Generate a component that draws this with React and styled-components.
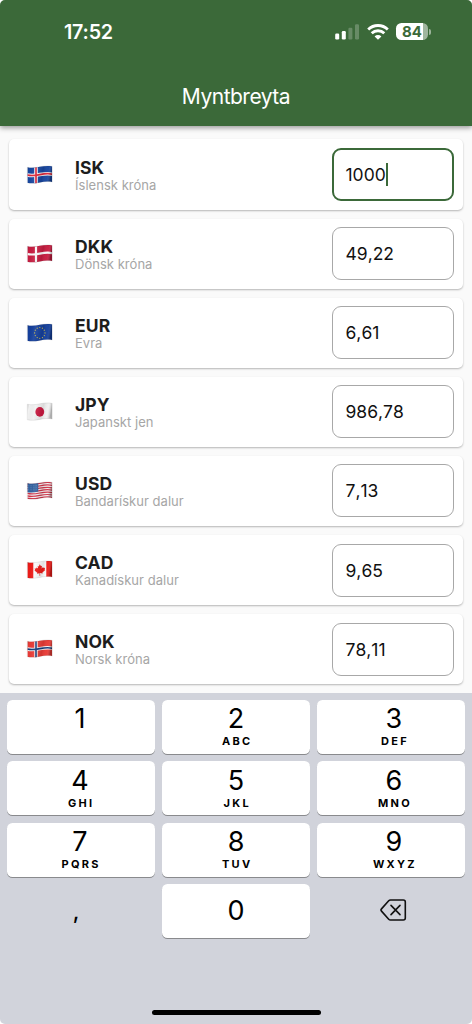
import { useState } from "react";
import styled, { createGlobalStyle } from "styled-components"

const colors = {
  green: `#3b6939`,
  page: `#fafafa`,
  keyboard: `#d1d3db`,
  text: `#1d1d1d`,
  muted: `#a6a6a6`,
}

const GlobalStyle = createGlobalStyle`
  * {
    box-sizing: border-box;
  }
  body {
    margin: 0;
    background-color: white;
    font-family: Inter, "Liberation Sans", sans-serif;
  }
`

const Screen = styled.div`
  width: 472px;
  height: 1024px;
  display: flex;
  flex-direction: column;
  overflow: hidden;
  border-radius: 5px;
  background-color: ${colors.page};
`

const Header = styled.header`
  flex: none;
  height: 126.4px;
  background-color: ${colors.green};
  color: white;
  box-shadow: 0 2px 5px rgba(0, 0, 0, 0.38);
  z-index: 1;
`

const StatusBar = styled.div`
  display: flex;
  justify-content: space-between;
  align-items: center;
  height: 64px;
  padding: 0 41px 0 64px;
`

const Time = styled.span`
  font-size: 19.7px;
  font-weight: 600;
  letter-spacing: -0.2px;
`

const StatusIcons = styled.div`
  display: flex;
  align-items: center;
  gap: 7px;
`

const Battery = styled.div`
  display: flex;
  align-items: center;
  gap: 1px;
  margin-top: -1px;
  &::after {
    content: "";
    width: 2px;
    height: 6px;
    border-radius: 0 2px 2px 0;
    background-color: rgba(255, 255, 255, 0.5);
  }
`

const BatteryLevel = styled.div`
  width: 32px;
  height: 17px;
  border-radius: 5.5px;
  background: linear-gradient(to right, white ${props => props.$level}%, #a0b59f ${props => props.$level}%);
  color: ${colors.green};
  font-size: 15px;
  font-weight: 700;
  line-height: 17px;
  text-align: center;
`

const Title = styled.h1`
  margin: 0;
  padding-top: 20px;
  font-size: 21px;
  font-weight: 400;
  line-height: 26px;
  letter-spacing: -0.5px;
  text-align: center;
`

const CurrencyList = styled.main`
  flex: none;
  height: 566.6px;
  display: flex;
  flex-direction: column;
  gap: 9px;
  padding: 13.1px 9px 0;
`

const CurrencyCard = styled.div`
  flex: none;
  height: 70.1px;
  display: flex;
  align-items: center;
  padding: 0 9px 0 17px;
  border-radius: 5px;
  background-color: white;
  box-shadow: 0 1px 2px rgba(0, 0, 0, 0.28);
`

const FlagIcon = styled.svg`
  flex: none;
  width: 27px;
  height: 20px;
`

const CurrencyText = styled.div`
  flex: 1;
  padding: 1px 0 0 22px;
`

const Code = styled.div`
  color: ${colors.text};
  font-size: 17.5px;
  font-weight: 700;
  line-height: 20px;
  letter-spacing: 0.1px;
`

const Name = styled.div`
  color: ${colors.muted};
  font-size: 13px;
  line-height: 15px;
  letter-spacing: 0.03px;
`

const AmountField = styled.div`
  width: 122.5px;
  height: 53px;
  display: flex;
  align-items: center;
  padding-left: ${props => props.$active ? 12 : 13}px;
  border: ${props => props.$active ? `2px solid ${colors.green}` : `1px solid #a8a8a8`};
  border-radius: 9px;
  color: #111;
  font-size: 17.5px;
  font-kerning: none;
  cursor: text;
`

const Caret = styled.span`
  width: 2px;
  height: 23px;
  background-color: ${colors.green};
`

const Keyboard = styled.div`
  flex: 1;
  display: flex;
  flex-direction: column;
  justify-content: space-between;
  align-items: center;
  padding: 6.6px 7px 9px;
  background-color: ${colors.keyboard};
`

const Keys = styled.div`
  width: 100%;
  display: grid;
  grid-template-columns: repeat(3, 1fr);
  grid-auto-rows: 54px;
  gap: 7.6px 7px;
`

const Key = styled.button`
  display: flex;
  flex-direction: column;
  align-items: center;
  justify-content: ${props => props.$centered ? "center" : "flex-start"};
  padding: ${props => props.$centered ? "0 0 1px" : "3.5px 0 0"};
  border: none;
  border-radius: 5.5px;
  background-color: ${props => props.$plain ? "transparent" : "white"};
  box-shadow: ${props => props.$plain ? "none" : "0 1px 0 #898a8d"};
  color: black;
  font-family: inherit;
  cursor: pointer;
  /* outer columns sit slightly off centre */
  &:nth-child(3n + 1) {
    padding-right: ${props => props.$plain ? 10 : 2}px;
  }
  &:nth-child(3n) {
    padding-left: 5.5px;
  }
`

const Digit = styled.span`
  font-size: 27px;
  font-weight: 400;
  line-height: 32px;
`

const Comma = styled.span`
  font-size: 22px;
  font-weight: 500;
  line-height: 30px;
`

const Letters = styled.span`
  padding-left: 2.4px;
  font-size: 11px;
  font-weight: 700;
  line-height: 12px;
  letter-spacing: 2.3px;
`

const HomeIndicator = styled.div`
  width: 169px;
  height: 5.5px;
  border-radius: 3px;
  background-color: black;
`

const SignalIcon = () => {
  return (
    <svg width="25" height="16" viewBox="0 0 25 16" fill="#FFF">
      <rect x="0.2" y="9.5" width="4" height="6" rx="1.2" />
      <rect x="6.8" y="7" width="4" height="8.5" rx="1.2" />
      <rect x="13.4" y="3.7" width="4" height="11.8" rx="1.2" opacity="0.23" />
      <rect x="20" y="0.3" width="4" height="15.2" rx="1.2" opacity="0.23" />
    </svg>
  )
}

const WifiIcon = () => {
  return (
    <svg width="22" height="16" viewBox="0 0 22 16" fill="none" stroke="#FFF" strokeWidth="2.8">
      <path d="M1.2 5.5a14 14 0 0 1 19.6 0" />
      <path d="M4.7 9.3a9 9 0 0 1 12.6 0" />
      <path d="M11 15.7L7.6 12.4a4.8 4.8 0 0 1 6.8 0z" fill="#FFF" stroke="none" />
    </svg>
  )
}

const BackspaceIcon = () => {
  return (
    <svg width="27" height="23" viewBox="0 0 27 23" fill="none" stroke="#111" strokeWidth="1.6" strokeLinecap="round" strokeLinejoin="round">
      <path d="M10.5 1H23.3a2 2 0 0 1 2 2v16a2 2 0 0 1-2 2H10.5a2.5 2.5 0 0 1-1.8-.8l-7.2-8.1a1.6 1.6 0 0 1 0-2.2l7.2-8.1a2.5 2.5 0 0 1 1.8-.8z" />
      <path d="M11 6.4l9 9.2M20 6.4l-9 9.2" />
    </svg>
  )
}

// a horizontal line that follows the wave of the flag
const wave = (y) => `M0 ${y}c4 1 8.5 .4 12.5-.4s8.5-1.4 12.5-.4`

const NordicCross = ({ color, width }) => {
  return (
    <g fill="none" stroke={color} strokeWidth={width}>
      <path d={wave(9.2)} />
      <path d="M8.7 0v20" />
    </g>
  )
}

const flags = {
  ISK: (
    <>
      <rect width="25" height="20" fill="#1746a0" />
      <NordicCross color="#f2f2f5" width={3.6} />
      <NordicCross color="#dc2638" width={1.7} />
    </>
  ),
  DKK: (
    <>
      <rect width="25" height="20" fill="#c71c40" />
      <NordicCross color="#fafafa" width={2.2} />
    </>
  ),
  EUR: (
    <>
      <rect width="25" height="20" fill="#143f9c" />
      {Array.from({ length: 12 }, (_, i) => (
        <circle
          key={i}
          cx={12.5 + 5.2 * Math.sin(i * Math.PI / 6)}
          cy={9.1 - 5.4 * Math.cos(i * Math.PI / 6)}
          r="0.6"
          fill="#d5bd43" />
      ))}
    </>
  ),
  JPY: (
    <>
      <rect width="25" height="20" fill="#f1f1f1" />
      <ellipse cx="12.5" cy="9.1" rx="4.4" ry="4.8" fill="#c9183f" />
    </>
  ),
  USD: (
    <>
      <rect width="25" height="20" fill="#f4eef0" />
      {[0, 1, 2, 3, 4, 5, 6].map(i => (
        <path key={i} d={wave(2 + i * 2.4)} fill="none" stroke="#cf3347" strokeWidth="1.2" />
      ))}
      <path d="M0 0h11v9.8q-5.5 1.3-11 .6z" fill="#31609f" />
      <path d="M1 4h9M1 6h9M1 8h9" stroke="#8ca9cd" strokeWidth="0.6" strokeDasharray="0.6 1" />
    </>
  ),
  CAD: (
    <>
      <rect width="25" height="20" fill="#fafafa" />
      <path d="M0 0h6v20h-6zM19 0h6v20h-6z" fill="#ed1b18" />
      <path d="M12.5 3.4l1.2 2.1 1-.5-.4 2.7 1.5-1.4.5 1 1.5-.3-.5 1.7.7.5-2.9 2.4.3 1-2.6-.3.1 2.6h-.7l.1-2.5-2.6.5.3-1-2.9-2.1.7-.7-.5-1.5 1.5.1.5-1.1 1.5 1.2-.4-2.6 1 .4z" fill="#ed1b18" />
    </>
  ),
  NOK: (
    <>
      <rect width="25" height="20" fill="#e93b36" />
      <NordicCross color="#f7f3f5" width={3.4} />
      <NordicCross color="#143a79" width={1.6} />
    </>
  ),
}

const Flag = ({ code }) => {
  const outline = "M0 1.4c4 1 8.5 .4 12.5-.4s8.5-1.4 12.5-.4v15.6c-4-1-8.5-.4-12.5.4s-8.5 1.4-12.5.4z"
  return (
    <FlagIcon viewBox="-1.3 -0.8 27 20">
      <defs>
        <clipPath id={`flag-${code}`}>
          <path d={outline} />
        </clipPath>
        <linearGradient id={`shade-${code}`} x2="1" y2="0.15">
          <stop offset="0" stopColor="#000" stopOpacity="0.22" />
          <stop offset="0.1" stopColor="#000" stopOpacity="0" />
          <stop offset="0.35" stopColor="#fff" stopOpacity="0.08" />
          <stop offset="0.65" stopColor="#000" stopOpacity="0.1" />
          <stop offset="0.85" stopColor="#fff" stopOpacity="0.03" />
          <stop offset="1" stopColor="#000" stopOpacity="0.28" />
        </linearGradient>
      </defs>
      <g clipPath={`url(#flag-${code})`}>
        {flags[code]}
        <rect width="25" height="20" fill={`url(#shade-${code})`} />
      </g>
      <path d={outline} fill="none" stroke="#000" strokeOpacity="0.2" strokeWidth="0.4" />
    </FlagIcon>
  )
}

const currencies = [
  { code: "ISK", name: "Íslensk króna", amount: "1000" },
  { code: "DKK", name: "Dönsk króna", amount: "49,22" },
  { code: "EUR", name: "Evra", amount: "6,61" },
  { code: "JPY", name: "Japanskt jen", amount: "986,78" },
  { code: "USD", name: "Bandarískur dalur", amount: "7,13" },
  { code: "CAD", name: "Kanadískur dalur", amount: "9,65" },
  { code: "NOK", name: "Norsk króna", amount: "78,11" },
]

const keys = [
  ["1", ""],
  ["2", "ABC"],
  ["3", "DEF"],
  ["4", "GHI"],
  ["5", "JKL"],
  ["6", "MNO"],
  ["7", "PQRS"],
  ["8", "TUV"],
  ["9", "WXYZ"],
]

function App() {
  const [active, setActive] = useState("ISK")

  return (
    <Screen>
      <GlobalStyle />
      <Header>
        <StatusBar>
          <Time>17:52</Time>
          <StatusIcons>
            <SignalIcon />
            <WifiIcon />
            <Battery>
              <BatteryLevel $level={84}>84</BatteryLevel>
            </Battery>
          </StatusIcons>
        </StatusBar>
        <Title>Myntbreyta</Title>
      </Header>
      <CurrencyList>
        {currencies.map(({ code, name, amount }) => (
          <CurrencyCard key={code}>
            <Flag code={code} />
            <CurrencyText>
              <Code>{code}</Code>
              <Name>{name}</Name>
            </CurrencyText>
            <AmountField $active={active === code} onClick={() => setActive(code)}>
              {amount}
              {active === code && <Caret />}
            </AmountField>
          </CurrencyCard>
        ))}
      </CurrencyList>
      <Keyboard>
        <Keys>
          {keys.map(([digit, letters]) => (
            <Key key={digit}>
              <Digit>{digit}</Digit>
              {letters && <Letters>{letters}</Letters>}
            </Key>
          ))}
          <Key $plain $centered>
            <Comma>,</Comma>
          </Key>
          <Key $centered>
            <Digit>0</Digit>
          </Key>
          <Key $plain $centered aria-label="Eyða">
            <BackspaceIcon />
          </Key>
        </Keys>
        <HomeIndicator />
      </Keyboard>
    </Screen>
  )
}

export default App
